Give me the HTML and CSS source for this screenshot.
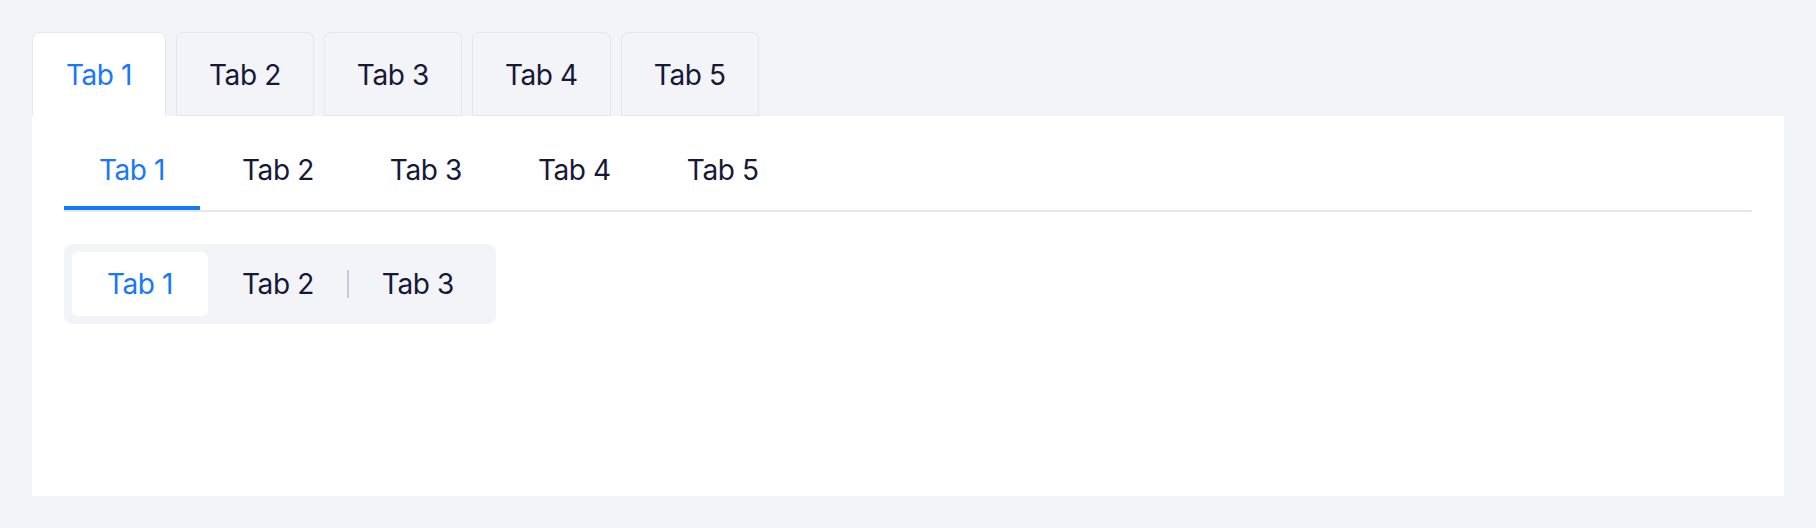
FILE: index.html
```html
<!DOCTYPE html>
<html lang="en">
<head>
<meta charset="utf-8">
<title>Tabs</title>
<link rel="stylesheet" href="styles.css">
</head>
<body>
<div class="page">
  <div class="card-tabs">
    <div class="card-tab active">Tab 1</div>
    <div class="card-tab">Tab 2</div>
    <div class="card-tab">Tab 3</div>
    <div class="card-tab">Tab 4</div>
    <div class="card-tab">Tab 5</div>
  </div>
  <div class="panel">
    <div class="line-tabs">
      <div class="line-tab active">Tab 1</div>
      <div class="line-tab">Tab 2</div>
      <div class="line-tab">Tab 3</div>
      <div class="line-tab">Tab 4</div>
      <div class="line-tab">Tab 5</div>
    </div>
    <div class="segmented">
      <div class="seg-item active">Tab 1</div>
      <div class="seg-item">Tab 2</div>
      <div class="seg-item divided">Tab 3</div>
    </div>
  </div>
</div>
</body>
</html>
```
FILE: styles.css
```css
html, body {
  margin: 0;
  padding: 0;
  background: #f3f4f8;
}
body {
  font-family: Inter, "Noto Sans", "Liberation Sans", sans-serif;
  font-size: 28px;
  font-weight: 400;
  letter-spacing: -0.4px;
  color: #161838;
}
.page {
  padding: 32px 32px 0 32px;
}
.card-tabs {
  display: flex;
  gap: 10px;
  align-items: flex-end;
}
.card-tab {
  box-sizing: border-box;
  min-width: 134px;
  height: 84px;
  padding: 1px 32px 0 32px;
  display: flex;
  align-items: center;
  justify-content: center;
  border: 1px solid #e5e6ee;
  border-radius: 7px 7px 0 0;
  background: #f3f4f8;
  line-height: 1;
}
.card-tab.active {
  background: #ffffff;
  color: #1677ff;
  border-bottom-color: #ffffff;
}
.panel {
  background: #ffffff;
  height: 380px;
  box-sizing: border-box;
  padding: 12px 32px;
}
.line-tabs {
  display: flex;
  gap: 8px;
  border-bottom: 2px solid #e7e8ee;
}
.line-tab {
  position: relative;
  min-width: 136px;
  height: 82px;
  padding: 1px 34px 0 34px;
  box-sizing: border-box;
  display: flex;
  align-items: center;
  justify-content: center;
  line-height: 1;
}
.line-tab.active {
  color: #1677ff;
}
.line-tab.active::after {
  content: "";
  position: absolute;
  left: 0;
  right: 0;
  bottom: 0;
  height: 4px;
  background: #1677ff;
}
.segmented {
  margin-top: 32px;
  display: inline-flex;
  padding: 8px;
  background: #f3f4f8;
  border-radius: 8px;
}
.seg-item {
  position: relative;
  min-width: 136px;
  box-sizing: border-box;
  height: 64px;
  padding: 0 34px;
  display: flex;
  align-items: center;
  justify-content: center;
  border-radius: 7px;
  line-height: 1;
}
.seg-item.active {
  background: #ffffff;
  color: #1677ff;
}
.seg-item.divided::before {
  content: "";
  position: absolute;
  left: -1px;
  top: 18px;
  width: 2px;
  height: 28px;
  background: #c9cad6;
}
```
